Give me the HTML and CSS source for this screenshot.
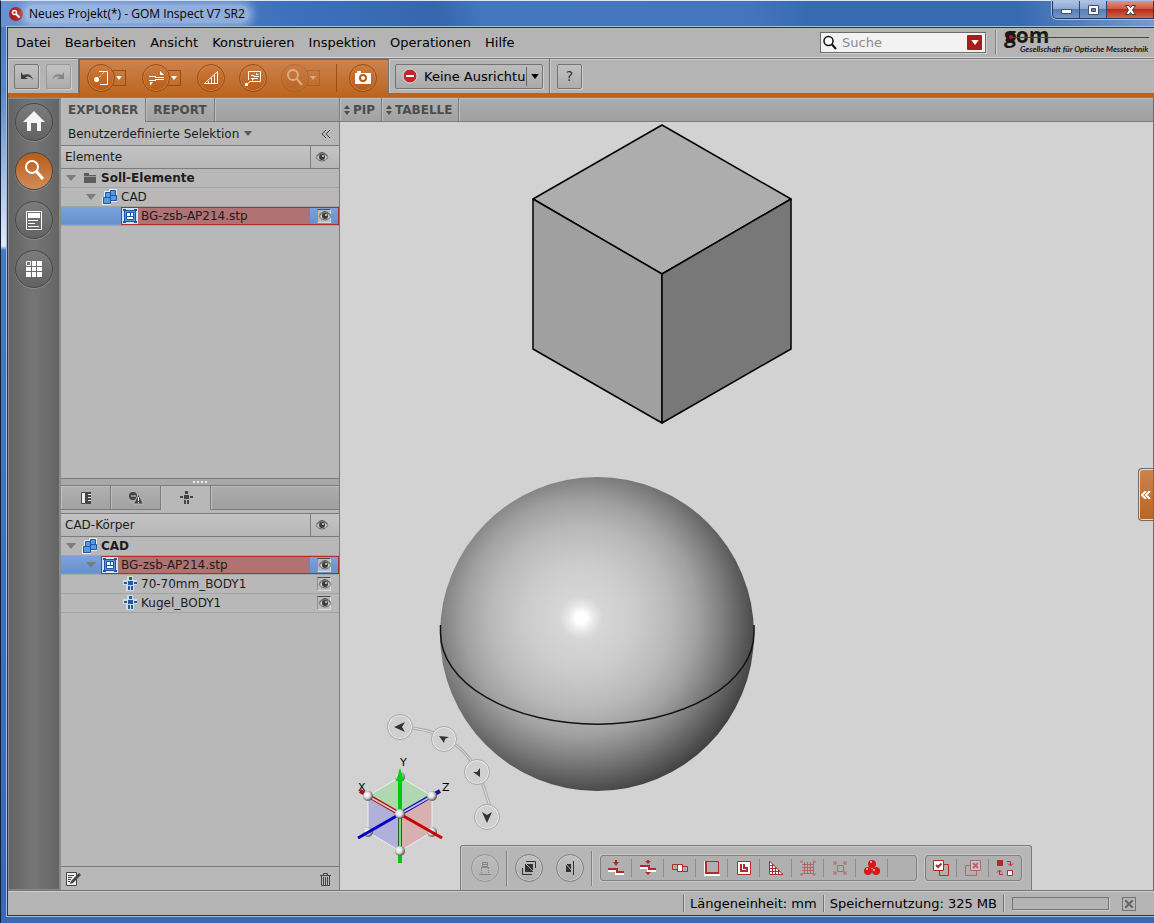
FILE: index.html
```html
<!DOCTYPE html>
<html lang="de">
<head>
    <meta charset="UTF-8">
    <meta name="viewport" content="width=device-width, initial-scale=1.0">
    <title>Neues Projekt(*) - GOM Inspect V7 SR2</title>
    <link rel="stylesheet" href="styles.css">
</head>
<body>
    <!-- Shared icons -->
    <svg class="defs" width="0" height="0" aria-hidden="true">
        <symbol id="eye" viewBox="0 0 14 12">
            <path d="M1 6.500Q3.500 2.500 7 2.500T13 6.500Q10.500 10 7 10T1 6.500Z" fill="#c8c8c8" stroke="#666"/>
            <path d="M1.500 5Q4 1.500 7 1.500T12.500 5" fill="none" stroke="#555"/>
            <circle cx="7" cy="6" r="3" fill="#3a3a3a"/>
            <circle cx="8" cy="5" r="1" fill="#ddd"/>
        </symbol>
        <symbol id="tri" viewBox="0 0 10 6"><path d="M0 0H10L5 6Z" fill="currentColor"/></symbol>
        <symbol id="drop" viewBox="0 0 6 4"><path d="M0 0H6L3 4Z" fill="currentColor"/></symbol>
        <symbol id="updown" viewBox="0 0 6 10"><path d="M0 4L3 0L6 4ZM0 6H6L3 10Z" fill="currentColor"/></symbol>
        <symbol id="cad" viewBox="0 0 16 16">
            <path d="M2 2H7V0H15V13H9V16H0V8H2Z" fill="#e4edf8"/>
            <path d="M3.500 3.500H8.500V8.500H3.500ZM8.500 1.500H13.500V6.500H8.500ZM8.500 6.500H14.500V11.500H8.500ZM1.500 8.500H8.500V14.500H1.500Z" fill="#5b98e0" stroke="#1c56a8"/>
        </symbol>
        <symbol id="part" viewBox="0 0 16 16">
            <path d="M0 0H16V16H0Z" fill="#d6e2f2"/>
            <path d="M2.500 2.500H13.500V13.500H2.500Z" fill="#5b90d8" stroke="#1c56a8"/>
            <path d="M1 1H4V3H1ZM12 1H15V3H12ZM1 13H4V15H1ZM12 13H15V15H12Z" fill="#1c56a8"/>
            <path d="M4.500 4.500H11.500V11.500H4.500Z" fill="#fff" stroke="#1c56a8"/>
            <path d="M4 8.500H12M8.500 4V8" stroke="#1c56a8"/>
        </symbol>
        <symbol id="body" viewBox="0 0 16 15">
            <path d="M5 0H11V4H15V9H12V15H4V9H1V4H5Z" fill="#d4dce6"/>
            <path d="M7 1H10V4H7ZM2 6H5V8H2ZM6 5H11V9H6ZM12 6H15V8H12ZM6 10H8V14H6ZM9 10H11V14H9Z" fill="#2458a8"/>
        </symbol>
    </svg>

    <div class="window">
        <header class="titlebar">
            <svg class="app-icon" width="14" height="14" viewBox="0 0 14 14">
                <circle cx="7" cy="7" r="7" fill="#b01c20"/>
                <circle cx="5.500" cy="5.500" r="2" fill="none" stroke="#fff" stroke-width="1.500"/>
                <path d="M7 7L10.500 10.500" stroke="#fff" stroke-width="2"/>
            </svg>
            <h1>Neues Projekt(*) - GOM Inspect V7 SR2</h1>
            <div class="win-buttons">
                <button aria-label="Minimieren"><svg width="13" height="12"><path d="M1.500 5.500H11.500V9.500H1.500Z" fill="#fff" stroke="#40506e"/></svg></button>
                <button aria-label="Maximieren"><svg width="13" height="12"><path d="M1.500 1.500H11.500V10.500H1.500ZM4.500 4.500V7.500H8.500V4.500Z" fill="#fff" fill-rule="evenodd" stroke="#40506e"/></svg></button>
                <button class="close" aria-label="Schließen"><svg width="13" height="12"><path d="M1.500 1.500H5L6.500 3.500L8 1.500H11.500L8.500 6L11.500 10.500H8L6.500 8.500L5 10.500H1.500L4.500 6Z" fill="#fff" stroke="#4a3840"/></svg></button>
            </div>
        </header>

        <div class="client">
            <div class="menubar">
                <nav>
                    <a href="#">Datei</a>
                    <a href="#">Bearbeiten</a>
                    <a href="#">Ansicht</a>
                    <a href="#">Konstruieren</a>
                    <a href="#">Inspektion</a>
                    <a href="#">Operationen</a>
                    <a href="#">Hilfe</a>
                </nav>
                <div class="search">
                    <svg width="16" height="16" viewBox="0 0 16 16"><circle cx="6.500" cy="6" r="4.500" fill="#fff" stroke="#111" stroke-width="1.500"/><path d="M10 9.500L14 14" stroke="#111" stroke-width="2"/></svg>
                    <input type="text" placeholder="Suche" aria-label="Suche">
                    <button aria-label="Suchoptionen"><svg width="8" height="5" viewBox="0 0 6 4"><path d="M0 0H6L3 4Z" fill="#fff"/></svg></button>
                </div>
                <svg class="logo" width="155" height="25" role="img" aria-label="gom">
                    <text class="logo-name" x="0" y="13">gom</text>
                    <circle cx="7" cy="7" r="5" fill="#181818"/>
                    <path d="M7 7.500H145" stroke="#a01c2c"/>
                    <circle cx="7" cy="7" r="2" fill="#d01020"/>
                    <text class="logo-sub" x="16" y="22">Gesellschaft für Optische Messtechnik</text>
                </svg>
            </div>

            <div class="toolbar">
                <div class="tool-group history">
                    <button class="sq" aria-label="Rückgängig"><svg width="15" height="12"><path d="M2 2V9H9L6 7Q11 5 14 10Q12 2 4 5Z" fill="#3c3c3c"/></svg></button>
                    <button class="sq" aria-label="Wiederholen"><svg width="15" height="12"><path d="M13 2V9H6L9 7Q4 5 1 10Q3 2 11 5Z" fill="#858585"/></svg></button>
                </div>
                <div class="tool-group orange">
                    <div class="split">
                        <button class="round" aria-label="Konstruieren"><svg width="18" height="18"><path d="M7 2.500H15.500V15.500H8" fill="none" stroke="#fff"/><path d="M5 11L12 3" stroke="#fff" stroke-dasharray="1 1"/><circle cx="4.500" cy="10.500" r="2.500" fill="#fff"/></svg></button>
                        <button class="arrow" aria-label="Mehr"><svg width="6" height="4"><use href="#drop"/></svg></button>
                    </div>
                    <div class="split">
                        <button class="round" aria-label="Ausrichtung"><svg width="18" height="18"><path d="M2 7.500H9M8 8.500H17M2 11.500H9M8 10.500H17" fill="none" stroke="#fff"/><path d="M13 2V6H17ZM3 13V17L6 13Z" fill="#fff"/></svg></button>
                        <button class="arrow" aria-label="Mehr"><svg width="6" height="4"><use href="#drop"/></svg></button>
                    </div>
                    <button class="round" aria-label="Abweichung"><svg width="18" height="18"><path d="M2 14.500H15.500V2.500L3 14M6.500 12V15M9.500 9V15M12.500 6V15" fill="none" stroke="#fff"/></svg></button>
                    <button class="round" aria-label="Fähnchen"><svg width="18" height="18"><path d="M4.500 11V2.500H16.500V12.500H6L2 16M7 6.500H10V7.500H15M7 9.500H14" fill="none" stroke="#fff"/><path d="M12 4V6H15ZM8 10V12L10 10ZM1 14H4V17H1Z" fill="#fff"/></svg></button>
                    <div class="split off">
                        <button class="round" aria-label="Lupe" disabled><svg width="20" height="20"><circle cx="8" cy="7" r="5" fill="none" stroke="#fff" stroke-width="2"/><path d="M12 11L17 17" stroke="#fff" stroke-width="2"/></svg></button>
                        <button class="arrow" aria-label="Mehr" disabled><svg width="6" height="4"><use href="#drop"/></svg></button>
                    </div>
                    <span class="bar"></span>
                    <button class="round camera" aria-label="Bild aufnehmen"><svg width="18" height="18"><path d="M1 4H3V2H7V4H17V15H1Z" fill="#fff"/><circle cx="9" cy="9" r="3" fill="none" stroke="#b85c18" stroke-width="2"/></svg></button>
                </div>
                <div class="tool-group align">
                    <div class="combo">
                        <svg width="16" height="16"><circle cx="8" cy="8" r="7" fill="#c0272d" stroke="#ddd"/><path d="M4 8H12" stroke="#fff" stroke-width="2"/></svg>
                        <select aria-label="Ausrichtung"><option>Keine Ausrichtung</option></select>
                        <span class="combo-arrow"><svg width="8" height="5" viewBox="0 0 6 4"><path d="M0 0H6L3 4Z"/></svg></span>
                    </div>
                </div>
                <div class="tool-group rest">
                    <button class="sq help">?</button>
                </div>
            </div>

            <main class="workspace">
                <aside class="sidebar">
                    <button aria-label="Start"><svg width="24" height="24"><path d="M12 1L23 12H19V21H15V13H9V21H5V12H1Z" fill="#f4f4f4"/></svg></button>
                    <button class="active" aria-label="Inspektion"><svg width="24" height="24"><circle cx="10" cy="8" r="6" fill="none" stroke="#fff" stroke-width="2"/><path d="M14 12L21 20" stroke="#fff" stroke-width="3"/></svg></button>
                    <button aria-label="Bericht"><svg width="24" height="24"><path d="M4.500 3.500H19.500V21.500H4.500Z" fill="none" stroke="#fff"/><path d="M6 5H18V10H6Z" fill="#fff"/><path d="M6 12.500H16M6 15.500H13M6 18.500H17" stroke="#fff"/></svg></button>
                    <button aria-label="Übersicht"><svg width="24" height="24"><path d="M4.500 4.500H8.500V8.500H4.500Z" fill="none" stroke="#fff"/><path d="M10 4H14V9H10ZM15 4H20V9H15ZM4 10H9V14H4ZM10 10H14V14H10ZM15 10H20V14H15ZM4 15H9V20H4ZM10 15H14V20H10ZM15 15H20V20H15Z" fill="#fff"/></svg></button>
                </aside>

                <section class="explorer">
                    <div class="tabs">
                        <button class="tab current">EXPLORER</button>
                        <button class="tab">REPORT</button>
                        <span class="tab-fill"></span>
                    </div>
                    <div class="selection">
                        <button>Benutzerdefinierte Selektion <svg width="8" height="5"><path d="M0 0H8L4 5Z" fill="#555"/></svg></button>
                        <button aria-label="Einklappen"><svg width="10" height="8"><path d="M5 0L1 4L5 8M9 0L5 4L9 8" fill="none" stroke="#444"/></svg></button>
                    </div>
                    <div class="pane">
                        <table class="tree">
                            <thead>
                                <tr><th>Elemente</th><th class="vis"><svg width="14" height="12"><use href="#eye"/></svg></th></tr>
                            </thead>
                            <tbody>
                                <tr><td><div class="item"><svg class="tri" width="10" height="6"><use href="#tri"/></svg><span class="label"><svg width="16" height="16"><path d="M2 3H7V5H14V13H2Z" fill="#5c5c5c"/><path d="M2 6.500H14" stroke="#999"/></svg><b>Soll-Elemente</b></span></div></td><td></td></tr>
                                <tr><td><div class="item level-2"><svg class="tri" width="10" height="6"><use href="#tri"/></svg><span class="label"><svg width="16" height="16"><use href="#cad"/></svg>CAD</span></div></td><td></td></tr>
                                <tr class="selected"><td><div class="item level-3"><span class="tri"></span><span class="label"><svg width="16" height="16"><use href="#part"/></svg>BG-zsb-AP214.stp</span></div></td><td><button class="eye" aria-label="Sichtbar"><svg width="14" height="12"><use href="#eye"/></svg></button></td></tr>
                            </tbody>
                        </table>
                    </div>
                    <div class="splitter"><i></i><i></i><i></i><i></i></div>
                    <div class="tabs icon-tabs">
                        <button class="tab" aria-label="Eigenschaften"><svg width="12" height="14"><path d="M1.500 1.500H5.500V12.500H1.500Z" fill="#eee" stroke="#444"/><path d="M6 1H11V13H6Z" fill="#444"/><path d="M8 3.500H11M8 6.500H11M8 9.500H11" stroke="#eee"/></svg></button>
                        <button class="tab" aria-label="Meldungen"><svg width="16" height="14"><circle cx="5" cy="5" r="4" fill="#444"/><path d="M3 5H8" stroke="#ddd"/><path d="M10.500 3L15.500 13H5.500Z" fill="#444" stroke="#bbb"/><path d="M10.500 6V10M10.500 11V12" stroke="#fff"/></svg></button>
                        <button class="tab current" aria-label="CAD-Körper"><svg width="14" height="14"><path d="M6 0H9V3H6ZM1 5H4V7H1ZM5 4H10V8H5ZM11 5H14V7H11ZM5 9H7V13H5ZM8 9H10V13H8Z" fill="#444"/></svg></button>
                        <span class="tab-fill"></span>
                    </div>
                    <div class="pane bodies">
                        <table class="tree">
                            <thead>
                                <tr><th>CAD-Körper</th><th class="vis"><svg width="14" height="12"><use href="#eye"/></svg></th></tr>
                            </thead>
                            <tbody>
                                <tr><td><div class="item"><svg class="tri" width="10" height="6"><use href="#tri"/></svg><span class="label"><svg width="16" height="16"><use href="#cad"/></svg><b>CAD</b></span></div></td><td></td></tr>
                                <tr class="selected"><td><div class="item level-2"><svg class="tri" width="10" height="6"><use href="#tri"/></svg><span class="label"><svg width="16" height="16"><use href="#part"/></svg>BG-zsb-AP214.stp</span></div></td><td><button class="eye" aria-label="Sichtbar"><svg width="14" height="12"><use href="#eye"/></svg></button></td></tr>
                                <tr><td><div class="item level-3"><span class="tri"></span><span class="label"><svg width="16" height="15"><use href="#body"/></svg>70-70mm_BODY1</span></div></td><td><button class="eye" aria-label="Sichtbar"><svg width="14" height="12"><use href="#eye"/></svg></button></td></tr>
                                <tr><td><div class="item level-3"><span class="tri"></span><span class="label"><svg width="16" height="15"><use href="#body"/></svg>Kugel_BODY1</span></div></td><td><button class="eye" aria-label="Sichtbar"><svg width="14" height="12"><use href="#eye"/></svg></button></td></tr>
                            </tbody>
                        </table>
                    </div>
                    <div class="pane-footer">
                        <button aria-label="Bearbeiten"><svg width="16" height="16"><path d="M1.500 1.500H11.500V14.500H1.500Z" fill="#eee" stroke="#444"/><path d="M3 4.500H9M3 6.500H7M3 8.500H6M3 10.500H5" stroke="#444"/><path d="M14 2L16 4L8 12L5 13L6 10Z" fill="#444"/></svg></button>
                        <button aria-label="Löschen"><svg width="14" height="16"><path d="M1 4.500H12M4.500 4V2.500H8.500V4M2.500 5V14.500H10.500V5M4.500 6V14M6.500 6V14M8.500 6V14" fill="none" stroke="#444"/></svg></button>
                    </div>
                </section>

                <section class="stage">
                    <div class="tabs">
                        <button class="tab"><svg width="6" height="10"><use href="#updown"/></svg>PIP</button>
                        <button class="tab"><svg width="6" height="10"><use href="#updown"/></svg>TABELLE</button>
                        <span class="tab-fill"></span>
                    </div>
                    <div class="viewport">
                        <svg class="scene" role="img" aria-label="3D-Ansicht">
                            <defs>
                                <radialGradient id="sphere" gradientUnits="userSpaceOnUse" cx="241" cy="496" r="180">
                                    <stop offset="0" stop-color="#fff"/>
                                    <stop offset=".03" stop-color="#fff"/>
                                    <stop offset=".07" stop-color="#e9e9e9"/>
                                    <stop offset=".12" stop-color="#d6d6d6"/>
                                    <stop offset=".3" stop-color="#cccccc"/>
                                    <stop offset=".5" stop-color="#b9b9b9"/>
                                    <stop offset=".65" stop-color="#a1a1a1"/>
                                    <stop offset=".79" stop-color="#7d7d7d"/>
                                    <stop offset=".9" stop-color="#5d5d5d"/>
                                    <stop offset="1" stop-color="#404040"/>
                                </radialGradient>
                                <radialGradient id="ball" cx=".4" cy=".4" r=".6">
                                    <stop offset="0" stop-color="#fff"/>
                                    <stop offset=".5" stop-color="#ddd"/>
                                    <stop offset="1" stop-color="#555"/>
                                </radialGradient>
                            </defs>
                            <!-- Cube -->
                            <g stroke="#000" stroke-width="1.500" stroke-linejoin="round">
                                <path d="M322 3L451 77L322 152L193 77Z" fill="#adadad"/>
                                <path d="M193 77L322 152V301L193 227Z" fill="#a0a0a0"/>
                                <path d="M451 77L322 152V301L451 227Z" fill="#787878"/>
                            </g>
                            <!-- Sphere -->
                            <circle cx="257" cy="512" r="157" fill="url(#sphere)"/>
                            <path d="M100.500 503V511A156.500 91 0 0 0 414 511V503" fill="none" stroke="#111" stroke-width="1.500"/>
                            <!-- Coordinate system -->
                            <path d="M60 692L28 674L60 655L92 674Z" fill="#b0d8b0"/>
                            <path d="M60 692L28 674V710L60 729Z" fill="#b0b0d8"/>
                            <path d="M60 692L92 674V710L60 729Z" fill="#d8b0b0"/>
                            <path d="M60 655L92 674V710L60 729L28 710V674Z" fill="none" stroke="#eee"/>
                            <g fill="url(#ball)"><circle cx="60" cy="655" r="5"/><circle cx="28" cy="710" r="5"/><circle cx="92" cy="710" r="5"/></g>
                            <path d="M60 692L20 669" stroke="#a01010" stroke-width="4"/>
                            <path d="M60 692L28 674" stroke="#e8c0c0" stroke-width="2"/>
                            <path d="M60 692L100 669" stroke="#1010a0" stroke-width="4"/>
                            <path d="M60 692L92 674" stroke="#c0c0f0" stroke-width="2"/>
                            <path d="M60 692V729" stroke="#206020" stroke-width="4"/>
                            <path d="M60 692V729" stroke="#80d880" stroke-width="2"/>
                            <path d="M60 729V741M60 692V654" stroke="#00c810" stroke-width="4"/>
                            <path d="M60 646L64 659H56Z" fill="#00d010"/>
                            <path d="M60 692L102 716" stroke="#c80000" stroke-width="3"/>
                            <path d="M60 692L18 716" stroke="#0000c8" stroke-width="3"/>
                            <g fill="url(#ball)"><circle cx="28" cy="674" r="5"/><circle cx="92" cy="674" r="5"/><circle cx="60" cy="729" r="5"/><circle cx="60" cy="692" r="5"/></g>
                            <g class="axis"><text x="18" y="669">X</text><text x="60" y="644">Y</text><text x="102" y="669">Z</text></g>
                            <path d="M60 605Q124 607 143 663T147 695" fill="none" stroke="#aaa" stroke-width="3"/>
                            <path d="M60 605Q124 607 143 663T147 695" fill="none" stroke="#e4e4e4"/>
                        </svg>
                        <button class="rotate r1" aria-label="Drehen 90°"><svg width="12" height="12"><path d="M0 6L11 1L8 6L11 11Z"/></svg></button>
                        <button class="rotate r2" aria-label="Drehen 60°"><svg width="12" height="12"><path d="M1 3L11 4L7 6L6 10Z"/></svg></button>
                        <button class="rotate r3" aria-label="Drehen 30°"><svg width="12" height="12"><path d="M9 11L2 6L6 6L9 2Z"/></svg></button>
                        <button class="rotate r4" aria-label="Drehen 0°"><svg width="12" height="12"><path d="M6 12L1 1L6 4L11 1Z"/></svg></button>

                        <button class="drawer" aria-label="Ausklappen"><svg width="10" height="8"><path d="M5 0L1 4L5 8M9 0L5 4L9 8" fill="none" stroke="#fff" stroke-width="2"/></svg></button>

                        <div class="dock">
                            <div class="dock-part">
                                <button class="round grey" aria-label="Stempel" disabled><svg width="14" height="14"><path d="M4.500 1.500H9.500V5.500H4.500ZM4 3.500H10M3 6.500H11M1 13.500H13" fill="none" stroke="#666"/><path d="M3.500 7V12M10.500 7V12" stroke="#666" stroke-dasharray="1 1"/></svg></button>
                            </div>
                            <div class="dock-part two">
                                <button class="round grey" aria-label="Auswahl"><svg width="16" height="16"><path d="M4 4H12V12H4Z" fill="#333"/><path d="M5 4L12 11" stroke="#aaa"/><path d="M5 1.500H14.500V8M1.500 8V14.500H11" fill="none" stroke="#333"/></svg></button>
                                <button class="round grey" aria-label="Ebene"><svg width="16" height="16"><path d="M4 4H9V12H4Z" fill="#333"/><path d="M4 4L9 10" stroke="#aaa"/><path d="M11.500 1V15" stroke="#333"/></svg></button>
                            </div>
                            <div class="strip">
                                <button aria-label="Werkzeug 1"><svg width="16" height="16"><path d="M0 11H8V14H16" fill="none" stroke="#fff" stroke-width="2"/><path d="M0 9H9V12H16" fill="none" stroke="#b02c2c" stroke-width="2"/><path d="M7 0H9V2H11L8 6L5 2H7Z" fill="#b02c2c"/></svg></button>
                                <button aria-label="Werkzeug 2"><svg width="16" height="16"><path d="M0 8H8V11H16" fill="none" stroke="#fff" stroke-width="2"/><path d="M0 6H9V9H16" fill="none" stroke="#b02c2c" stroke-width="2"/><path d="M7 0H9V1H11L8 4L5 1H7ZM5 12H11L8 15Z" fill="#b02c2c"/></svg></button>
                                <button aria-label="Werkzeug 3"><svg width="16" height="16"><path d="M.500 4.500H6.500V9.500H.500ZM10.500 6.500H15.500V11.500H10.500Z" fill="none" stroke="#b02c2c"/><path d="M5.500 4.500H10.500V11.500H5.500Z" fill="#fff" stroke="#b02c2c"/></svg></button>
                                <button aria-label="Werkzeug 4"><svg width="16" height="16"><path d="M0 1V15H16" fill="none" stroke="#fff" stroke-width="2"/><path d="M2 1.500H14.500V13" fill="none" stroke="#b02c2c"/><path d="M2 1V13H15" fill="none" stroke="#b02c2c" stroke-width="2"/></svg></button>
                                <button aria-label="Werkzeug 5"><svg width="16" height="16"><path d="M1.500 1.500H14.500V14.500H1.500Z" fill="#fff" stroke="#b02c2c"/><path d="M5 4V11H11V8H8V4" fill="none" stroke="#b02c2c" stroke-width="2"/></svg></button>
                                <button aria-label="Werkzeug 6"><svg width="16" height="16"><path d="M1.500 1V14.500H15Z" fill="#fff" stroke="#b02c2c"/><path d="M4.500 4V15M7.500 7V15M10.500 10V15M1 8.500H9M1 11.500H12M1 5.500H6" stroke="#b02c2c"/></svg></button>
                                <button class="faded" aria-label="Werkzeug 7" disabled><svg width="16" height="16"><path d="M2 4.500H14M2 7.500H14M2 10.500H14M4.500 2V14M7.500 2V14M10.500 2V14M1 3V1H3M13 1H15V3M15 13V15H13M3 15H1V13M2 13.500H14M13.500 2V14" fill="none" stroke="#b02c2c"/></svg></button>
                                <button class="faded" aria-label="Werkzeug 8" disabled><svg width="16" height="16"><path d="M5.500 5.500H11.500V11.500H5.500ZM1 1L4 4M15 1L12 4M1 15L4 12M15 15L12 12M1 4H4V1M12 1V4H15M1 12H4V15M12 15V12H15" fill="none" stroke="#b02c2c"/></svg></button>
                                <button aria-label="Werkzeug 9"><svg width="18" height="18"><g fill="#d81818"><circle cx="9" cy="5" r="4"/><circle cx="5" cy="12" r="4"/><circle cx="13" cy="12" r="4"/></g><g fill="#ffc0c0"><circle cx="8" cy="3" r="1"/><circle cx="4" cy="10" r="1"/><circle cx="11" cy="11" r="1"/></g></svg></button>
                                <span class="blank"></span>
                            </div>
                            <div class="strip">
                                <button aria-label="Anwenden"><svg width="16" height="16"><path d="M6.500 4.500H15.500V15.500H6.500Z" fill="none" stroke="#b02c2c"/><path d="M.500 .500H10.500V10.500H.500Z" fill="#fff" stroke="#b02c2c"/><path d="M3 5L5 7L8.500 3.500" fill="none" stroke="#b02c2c" stroke-width="2"/></svg></button>
                                <button class="faded" aria-label="Verwerfen" disabled><svg width="16" height="16"><path d="M.500 5.500H11.500V15.500H.500Z" fill="none" stroke="#b02c2c"/><path d="M5.500 .500H15.500V10.500H5.500Z" fill="#ddd" stroke="#b02c2c"/><path d="M8 3L13 8M13 3L8 8" stroke="#b02c2c" stroke-width="2"/></svg></button>
                                <button aria-label="Umkehren"><svg width="18" height="16"><path d="M1 0H7V6H1Z" fill="#b02c2c"/><path d="M11.500 10.500H16.500V15.500H11.500Z" fill="#fff" stroke="#b02c2c"/><path d="M11 1.500H14.500V5M12 3.500L14.500 6L17 3.500M7 14.500H3.500V11M1 12.500L3.500 10L6 12.500" fill="none" stroke="#b02c2c"/></svg></button>
                            </div>
                        </div>
                    </div>
                </section>
            </main>

            <footer class="statusbar">
                <span class="status">Längeneinheit: mm</span>
                <span class="status">Speichernutzung: 325 MB</span>
                <span class="status load"><span class="progress"></span></span>
                <button aria-label="Abbrechen" disabled><svg width="8" height="8"><path d="M0 0L8 8M8 0L0 8" stroke="#666" stroke-width="2"/></svg></button>
            </footer>
        </div>
    </div>
</body>
</html>
```

FILE: styles.css
```css
/* General styles */
* {
    box-sizing: border-box;
}

body {
    margin: 0;
    font-family: "DejaVu Sans", Verdana, sans-serif;
    font-size: 13px;
    color: #111;
}

button,
input,
select {
    font: inherit;
    color: inherit;
    margin: 0;
    padding: 0;
    border: 0;
    background: none;
    outline: none;
}

svg {
    display: block;
    flex: none;
}

.defs {
    position: absolute;
}

/* Window frame */
.window {
    display: flex;
    flex-direction: column;
    min-height: 100vh;
    padding: 0 0 7px 6px;
    border-left: 1px solid #10203c;
    border-top: 1px solid #dce6f4;
    background: linear-gradient(#4a7ac0, #5a88c8 90px, #e4eaf6 245px, #4878c0 249px, #3a68b4);
}

.titlebar {
    display: flex;
    align-items: center;
    height: 26px;
    margin-left: -6px;
    padding-left: 8px;
    background: linear-gradient(75deg, #6a94d0, #3f70bc 25%, #3566ae 38%, #4577c0 42%, #4474be 65%, #386ab2 70%, #386ab2 88%, #7a9cd0);
}

.titlebar h1 {
    margin: 0 0 0 2px;
    padding: 0 4px;
    font: 12px "Open Sans", sans-serif;
    line-height: 18px;
    color: #000;
    border-radius: 8px;
    background: rgba(190, 208, 236, 0.6);
    box-shadow: 0 0 8px 4px rgba(190, 208, 236, 0.6);
}

.win-buttons {
    display: flex;
    align-self: flex-start;
    margin-left: auto;
    border: 1px solid #24385c;
    border-width: 0 1px 1px;
    border-radius: 0 0 0 5px;
    box-shadow: 0 0 0 1px #a8c0e4;
    overflow: hidden;
}

.win-buttons button {
    display: grid;
    place-items: center;
    width: 27px;
    height: 17px;
    border-right: 1px solid #30486e;
    background: linear-gradient(#b0c4e2, #8ca8d2 45%, #587eb4 50%, #7496c6);
}

.win-buttons .close {
    width: 46px;
    border: 0;
    background: linear-gradient(#dc9488, #cc5a48 45%, #b42c18 50%, #d06848);
}

.client {
    display: flex;
    flex-direction: column;
    flex: 1;
    border: 1px solid #22365c;
    border-right-width: 0;
    background: #b4b4b4;
    box-shadow: 0 0 0 1px #a4bce0;
}

/* Menu */
.menubar {
    display: flex;
    align-items: center;
    height: 30px;
    padding: 0 4px 0 8px;
    border-bottom: 1px solid #d4d4d4;
}

.menubar nav {
    display: flex;
    gap: 14px;
    margin-right: auto;
}

.menubar a {
    color: #000;
    text-decoration: none;
}

.search {
    display: flex;
    align-items: center;
    width: 166px;
    height: 21px;
    padding: 0 3px 0 1px;
    border: 1px solid #6c6c6c;
    background: #f2f2f2;
    box-shadow: 1px 1px 0 #d0d0d0;
}

.search input {
    flex: 1;
    min-width: 0;
    padding-left: 4px;
}

.search input::placeholder {
    color: #8c8c8c;
    opacity: 1;
}

.search button {
    display: grid;
    place-items: center;
    width: 15px;
    height: 15px;
    border-radius: 1px;
    background: #a81c1c;
}

.logo {
    margin-left: 9px;
    padding-left: 8px;
    border-left: 1px solid #808080;
    box-shadow: inset 1px 0 0 #d0d0d0;
    overflow: visible;
}

.logo-name {
    font: bold 21px "Open Sans", sans-serif;
    fill: #181818;
}

.logo-sub {
    font: italic bold 8px Lato, sans-serif;
    fill: #181818;
}

/* Toolbar */
.toolbar {
    display: flex;
    height: 39px;
    border-top: 1px solid #747474;
    background: #bc641e;
}

.tool-group {
    display: flex;
    align-items: center;
    height: 35px;
    border-right: 1px solid #747474;
    border-bottom: 1px solid #747474;
    background: #b4b4b4;
    box-shadow: inset 1px 1px 0 #cacaca;
}

.history {
    width: 71px;
    gap: 7px;
    padding-left: 6px;
}

.orange {
    width: 309px;
    height: 38px;
    padding: 0 8px;
    border: 0;
    background: linear-gradient(#cc8450, #bc641e);
    box-shadow: inset 1px 1px 0 #b45810;
}

.align {
    width: 162px;
    padding-left: 6px;
    border-left: 1px solid #747474;
}

.rest {
    flex: 1;
    padding-left: 7px;
    border-right: 0;
}

.sq {
    display: grid;
    place-items: center;
    width: 25px;
    height: 25px;
    border: 1px solid #747474;
    border-radius: 2px;
    background: linear-gradient(#c2c2c2, #acacac);
    box-shadow: 1px 1px 0 #cecece;
}

.sq:nth-child(2) {
    border-color: #989898;
}

.help {
    font-size: 14px;
    color: #333;
}

.split {
    display: flex;
    align-items: center;
    margin-right: 16px;
}

.round {
    display: grid;
    place-items: center;
    width: 28px;
    height: 28px;
    border: 1px solid #9c4c0c;
    border-radius: 50%;
    background: linear-gradient(#cc7c40, #b85c18);
    box-shadow: inset 0 0 0 1px #cc8048;
}

.orange > .round {
    margin-right: 14px;
}

.orange > .camera {
    margin: 0 0 0 12px;
}

.arrow {
    display: grid;
    place-items: center;
    width: 13px;
    height: 16px;
    margin-left: -2px;
    border: 1px solid #9c4c0c;
    border-left: 0;
    color: #fff;
}

.off {
    opacity: 0.4;
}

.bar {
    width: 1px;
    height: 28px;
    background: #a44c0c;
}

.combo {
    display: flex;
    align-items: center;
    width: 148px;
    height: 25px;
    padding-left: 6px;
    border: 1px solid #747474;
    border-radius: 2px;
    background: linear-gradient(#bcbcbc, #aaaaaa);
    box-shadow: 1px 1px 0 #cecece;
}

.combo select {
    flex: 1;
    min-width: 0;
    padding-left: 6px;
    appearance: none;
    overflow: hidden;
    color: #000;
}

.combo-arrow {
    display: grid;
    place-items: center;
    width: 16px;
    height: 19px;
    border-left: 1px solid #666;
}

/* Workspace */
.workspace {
    display: flex;
    flex: 1;
    min-height: 0;
    border-top: 1px solid #808080;
    border-bottom: 1px solid #747474;
    background: #b8b8b8;
}

.sidebar {
    display: flex;
    flex-direction: column;
    align-items: center;
    gap: 11px;
    width: 53px;
    padding-top: 4px;
    border: 1px solid #8a8a8a;
    border-right: 2px solid #8c8c8c;
    background: linear-gradient(90deg, #646464, #767676 50%, #646464);
}

.sidebar button {
    display: grid;
    place-items: center;
    width: 38px;
    height: 38px;
    border: 1px solid #484848;
    border-radius: 50%;
    background: linear-gradient(#7c7c7c, #626262);
    box-shadow: 0 1px 0 #8c8c8c;
}

.sidebar .active {
    background: linear-gradient(#b85c18, #d08c58);
}

/* Tabs */
.tabs {
    display: flex;
    height: 24px;
    background: #a6a6a6;
}

.tab {
    display: flex;
    align-items: center;
    justify-content: center;
    gap: 3px;
    padding: 0 7px;
    border: 1px solid #7c7c7c;
    border-top: 0;
    border-left: 0;
    font-size: 12px;
    font-weight: bold;
    color: #4c4c4c;
    background: linear-gradient(#b0b0b0, #a2a2a2);
    box-shadow: inset 1px 1px 0 #bebebe;
}

.current {
    border-bottom: 0;
    background: #b8b8b8;
}

.tab-fill {
    flex: 1;
    border-bottom: 1px solid #7c7c7c;
    background: linear-gradient(#acacac, #a0a0a0);
    box-shadow: inset 1px 1px 0 #bebebe;
}

/* Explorer */
.explorer {
    display: flex;
    flex-direction: column;
    width: 279px;
    border-right: 1px solid #7c7c7c;
    color: #1c1c1c;
}

.selection {
    display: flex;
    justify-content: space-between;
    height: 24px;
    padding: 0 8px 0 7px;
    border-bottom: 1px solid #7c7c7c;
    font-size: 12px;
}

.selection button {
    display: flex;
    align-items: center;
    gap: 5px;
}

.pane {
    flex: 1;
}

.tree {
    width: 100%;
    table-layout: fixed;
    border-collapse: collapse;
    font-size: 12px;
}

.tree th {
    height: 22px;
    padding: 0 4px;
    border-bottom: 1px solid #7c7c7c;
    font-weight: normal;
    text-align: left;
    background: linear-gradient(#c4c4c4, #b6b6b6);
}

.tree .vis {
    width: 29px;
    border-left: 1px solid #7c7c7c;
}

.tree td {
    height: 19px;
    padding: 0;
    border-bottom: 1px solid #a4a4a4;
}

.item {
    display: flex;
    align-items: center;
    height: 18px;
    padding-left: 5px;
}

.level-2 {
    padding-left: 25px;
}

.level-3 {
    padding-left: 45px;
}

.tri {
    width: 10px;
    margin-right: 5px;
    color: #7c7c7c;
}

.label {
    display: flex;
    align-items: center;
    gap: 3px;
    flex: 1;
    height: 18px;
    padding-left: 1px;
}

.selected td {
    background: linear-gradient(#7ca4dc, #6490cc);
}

.selected .label {
    border: 1px solid #b02c2c;
    border-right: 0;
    padding-left: 0;
    background: #b07272;
}

.selected td:last-child {
    box-shadow: inset 0 1px 0 #b02c2c, inset -1px -1px 0 #b02c2c;
}

.eye {
    display: grid;
    place-items: center;
    width: 14px;
    height: 14px;
    margin-left: 7px;
    border: 1px solid #6c6c6c;
    border-color: #505050 #d8d8d8 #d8d8d8 #909090;
    background: #bcbcbc;
}

.splitter {
    display: flex;
    justify-content: center;
    align-items: center;
    gap: 2px;
    height: 8px;
    border-top: 1px solid #7c7c7c;
    border-bottom: 1px solid #7c7c7c;
    background: #a8a8a8;
}

.splitter i {
    width: 2px;
    height: 2px;
    background: #eee;
}

.icon-tabs .tab {
    width: 50px;
}

.bodies {
    flex: none;
    height: 353px;
    margin-top: 3px;
    border-top: 1px solid #7c7c7c;
}

.pane-footer {
    display: flex;
    justify-content: space-between;
    align-items: center;
    height: 24px;
    padding: 0 6px 0 4px;
    border-top: 1px solid #7c7c7c;
}

/* 3D view */
.stage {
    display: flex;
    flex-direction: column;
    flex: 1;
    border-right: 1px solid #6c6c6c;
}

.stage .tab {
    padding: 0 6px 0 4px;
}

.viewport {
    position: relative;
    flex: 1;
    overflow: hidden;
    background: #d2d2d2;
}

.scene {
    position: absolute;
    width: 100%;
    height: 100%;
}

.axis {
    font-size: 11px;
}

.rotate {
    position: absolute;
    display: grid;
    place-items: center;
    width: 26px;
    height: 26px;
    border: 1px solid #aaa;
    border-radius: 50%;
    background: #d0d0d0;
    box-shadow: inset 0 0 0 1px #ececec;
}

.rotate svg {
    fill: #333;
}

.r1 { left: 47px; top: 592px; }
.r2 { left: 91px; top: 604px; }
.r3 { left: 124px; top: 637px; }
.r4 { left: 134px; top: 682px; }

.drawer {
    position: absolute;
    right: 0;
    top: 346px;
    display: grid;
    place-items: center;
    width: 15px;
    height: 53px;
    border: 1px solid #6c6c6c;
    border-right: 0;
    border-radius: 4px 0 0 4px;
    background: linear-gradient(#cc8450, #bc641e);
    box-shadow: inset 1px 1px 0 #ddd, inset 0 -1px 0 #ddd;
}

.dock {
    position: absolute;
    left: 120px;
    bottom: 0;
    display: flex;
    align-items: center;
    width: 572px;
    height: 45px;
    padding-left: 10px;
    border: 1px solid #7c7c7c;
    border-bottom: 0;
    border-radius: 3px 3px 0 0;
    background: #b6b6b6;
    box-shadow: inset 1px 1px 0 #cacaca;
}

.dock-part {
    display: flex;
    align-items: center;
    gap: 13px;
    height: 35px;
    padding-right: 7px;
    margin-right: 8px;
    border-right: 1px solid #808080;
    box-shadow: 1px 0 0 #cacaca;
}

.grey {
    border-color: #808080;
    background: linear-gradient(#c0c0c0, #b0b0b0);
    box-shadow: inset 0 0 0 1px #cacaca;
}

.grey:disabled {
    opacity: 0.6;
}

.strip {
    display: flex;
    align-items: center;
    height: 26px;
    margin-right: 8px;
    border: 1px solid #808080;
    border-radius: 3px;
    background: #b0b0b0;
    box-shadow: 0 0 0 1px #c6c6c6;
}

.strip button {
    display: grid;
    place-items: center;
    width: 32px;
    height: 18px;
    border-right: 1px solid #8c8c8c;
}

.strip button:first-child {
    width: 31px;
}

.strip button:last-child {
    border: 0;
}

.faded svg {
    opacity: 0.55;
}

.blank {
    width: 28px;
}

/* Status bar */
.statusbar {
    display: flex;
    align-items: center;
    justify-content: flex-end;
    height: 24px;
    padding-right: 18px;
    border-top: 1px solid #cecece;
    color: #000;
}

.status {
    display: flex;
    align-items: center;
    height: 17px;
    padding: 0 6px;
    border-left: 1px solid #747474;
    box-shadow: inset 1px 0 0 #cecece;
}

.load {
    padding: 0 9px 0 8px;
}

.progress {
    width: 97px;
    height: 13px;
    border: 1px solid #747474;
    box-shadow: 1px 1px 0 #cecece;
}

.statusbar button {
    display: grid;
    place-items: center;
    width: 14px;
    height: 14px;
    margin-left: 4px;
    border: 1px solid #747474;
}
```
